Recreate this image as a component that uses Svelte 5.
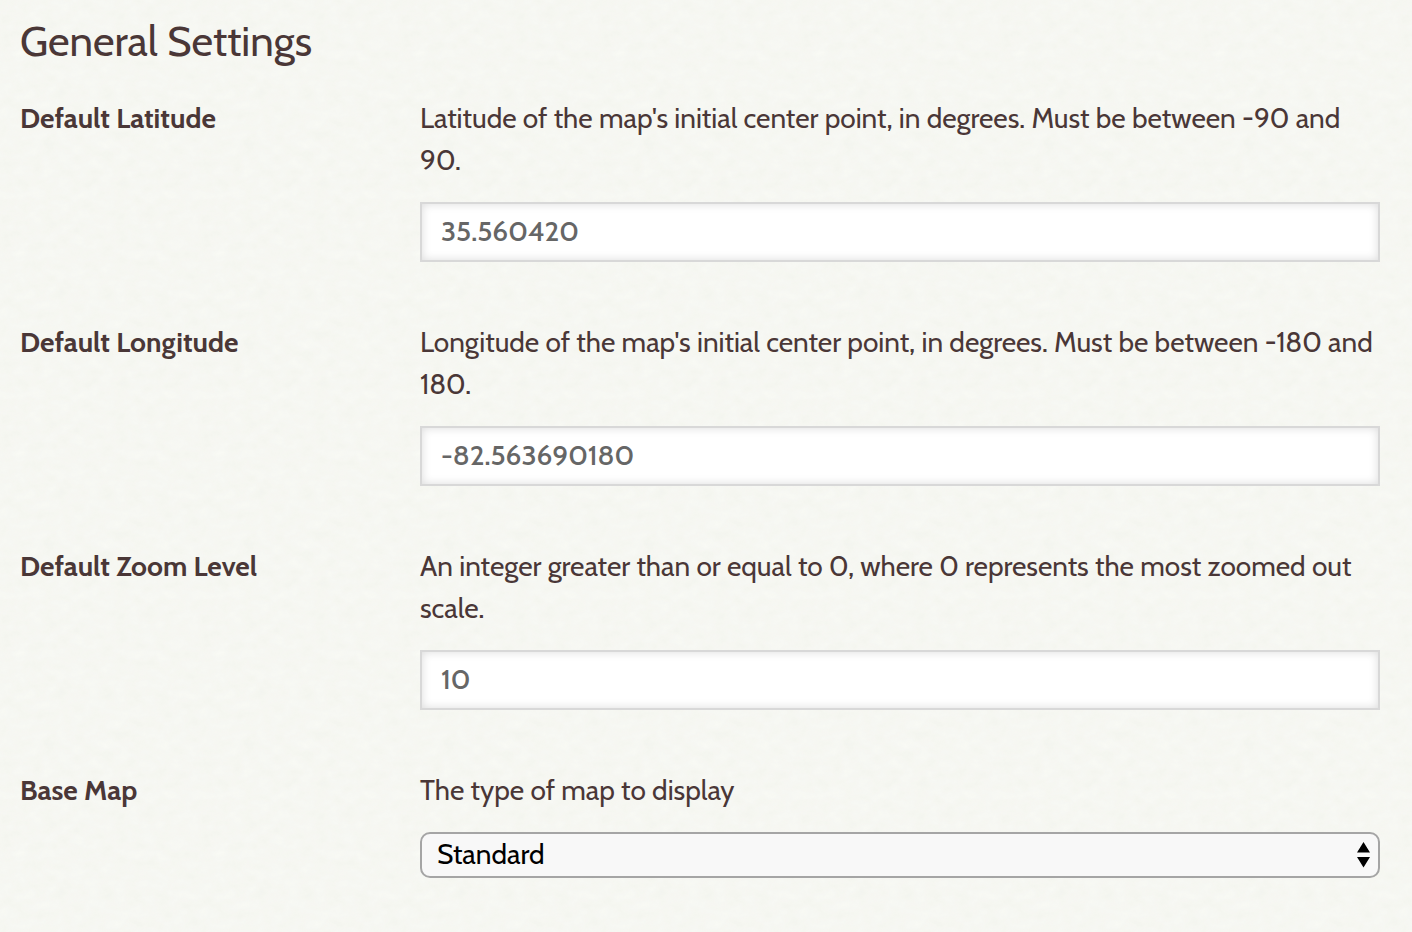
<script>
  let baseMap = $state('standard');
  const fields = $state([
    {
      id: 'latitude',
      label: 'Default Latitude',
      help: "Latitude of the map's initial center point, in degrees. Must be between -90 and 90.",
      value: '35.560420'
    },
    {
      id: 'longitude',
      label: 'Default Longitude',
      help: "Longitude of the map's initial center point, in degrees. Must be between -180 and 180.",
      value: '-82.563690180'
    },
    {
      id: 'zoom',
      label: 'Default Zoom Level',
      help: 'An integer greater than or equal to 0, where 0 represents the most zoomed out scale.',
      value: '10'
    }
  ]);
</script>

<main>
  <h1>General Settings</h1>
  <form>
    {#each fields as field (field.id)}
      <div class="field">
        <label for={field.id}>{field.label}</label>
        <div class="control">
          <p id="{field.id}-help">{field.help}</p>
          <input id={field.id} type="text" bind:value={field.value} aria-describedby="{field.id}-help" />
        </div>
      </div>
    {/each}
    <div class="field">
      <label for="base-map">Base Map</label>
      <div class="control">
        <p id="base-map-help">The type of map to display</p>
        <select id="base-map" bind:value={baseMap} aria-describedby="base-map-help">
          <option value="standard">Standard</option>
        </select>
      </div>
    </div>
  </form>
</main>

<style>
  :global(body) {
    margin: 0;
    background-color: #f9faf5;
    background-image: url("data:image/svg+xml,%3Csvg xmlns='http://www.w3.org/2000/svg' width='200' height='200'%3E%3Cfilter id='n' x='0' y='0' width='100%25' height='100%25' color-interpolation-filters='sRGB'%3E%3CfeTurbulence type='fractalNoise' baseFrequency='.07 .1' numOctaves='3' stitchTiles='stitch'/%3E%3CfeColorMatrix values='0 0 0 0 .84 0 0 0 0 .85 0 0 0 0 .82 .2 0 0 0 -.01'/%3E%3C/filter%3E%3Crect width='200' height='200' filter='url(%23n)'/%3E%3C/svg%3E");
  }

  main {
    box-sizing: border-box;
    padding: 15px 32px 54px 20px;
    color: #4a3737;
    font-family: Cabin, Lato, sans-serif;
    font-size: 28px;
    line-height: 42px;
  }

  h1 {
    margin: 0 0 30px;
    font-size: 42px;
    font-weight: 400;
    line-height: 52px;
  }

  form {
    display: grid;
    gap: 59px;
  }

  .field {
    display: grid;
    grid-template-columns: 400px minmax(0, 1fr);
  }

  label {
    font-weight: 700;
  }

  p {
    margin: 0 0 21px;
  }

  input,
  select {
    display: block;
    box-sizing: border-box;
    width: 100%;
    margin: 0;
    font: inherit;
  }

  input {
    height: 60px;
    padding: 0 19px 2px;
    border: 2px solid #d8d8d8;
    border-radius: 0;
    background: #fff;
    box-shadow: inset 0 0 10px rgba(0, 0, 0, 0.14);
    color: #666;
    font-weight: 500;
  }

  select {
    height: 46px;
    padding: 0 40px 2px 15px;
    border: 2px solid #a5a5a5;
    border-radius: 10px;
    appearance: none;
    background: #f8f8f8 url("data:image/svg+xml,%3Csvg xmlns='http://www.w3.org/2000/svg' width='13' height='26' viewBox='0 0 13 26'%3E%3Cpath d='M6.5 0 13 10.5H0zM0 15h13L6.5 25.5z'/%3E%3C/svg%3E") no-repeat right 8px center;
    color: #000;
    line-height: 40px;
  }
</style>
